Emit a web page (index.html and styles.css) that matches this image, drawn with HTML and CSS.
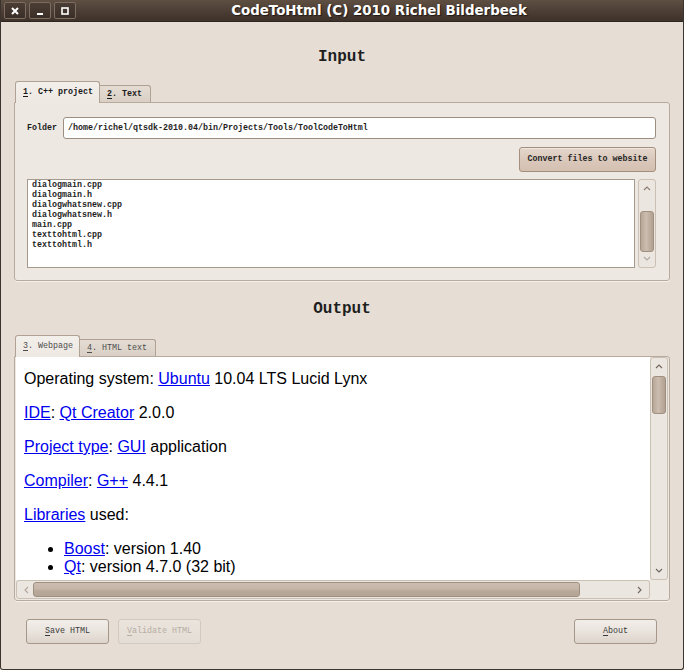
FILE: index.html
```html
<!DOCTYPE html>
<html>
<head>
<meta charset="utf-8">
<link rel="stylesheet" href="styles.css">
</head>
<body>
<div class="window">
  <div class="titlebar">
    <div class="wbtns">
      <div class="wbtn"><svg width="10" height="10" viewBox="0 0 10 10"><path d="M2 2 L8 8 M8 2 L2 8" stroke="#fff" stroke-width="2"/></svg></div>
      <div class="wbtn"><svg width="10" height="10" viewBox="0 0 10 10"><path d="M2 8 H8" stroke="#fff" stroke-width="2"/></svg></div>
      <div class="wbtn"><svg width="10" height="10" viewBox="0 0 10 10"><rect x="2" y="2" width="6" height="6" fill="none" stroke="#fff" stroke-width="1.6"/></svg></div>
    </div>
    <div class="title">CodeToHtml (C) 2010 Richel Bilderbeek</div>
  </div>
  <div class="content">
    <h2 class="heading first">Input</h2>
    <div class="tabbar">
      <div class="tab sel in t1"><u>1</u>. C++ project</div>
      <div class="tab in t2"><u>2</u>. Text</div>
    </div>
    <div class="panel inpanel">
      <div class="folderrow">
        <span class="lbl">Folder</span>
        <div class="field">/home/richel/qtsdk-2010.04/bin/Projects/Tools/ToolCodeToHtml</div>
      </div>
      <div class="btnrow">
        <div class="convert">Convert files to website</div>
      </div>
      <div class="listrow">
        <div class="list">
          <div>dialogmain.cpp</div>
          <div>dialogmain.h</div>
          <div>dialogwhatsnew.cpp</div>
          <div>dialogwhatsnew.h</div>
          <div>main.cpp</div>
          <div>texttohtml.cpp</div>
          <div>texttohtml.h</div>
        </div>
        <div class="vscroll small">
          <svg class="arr" width="8" height="5" viewBox="0 0 8 5"><polyline points="1,4 4,1 7,4" fill="none" stroke="#8a7e73" stroke-width="1.1"/></svg>
          <div class="vthumb t-list"></div>
          <svg class="arr down" width="8" height="5" viewBox="0 0 8 5"><polyline points="1,1 4,4 7,1" fill="none" stroke="#b3a89d" stroke-width="1.1"/></svg>
        </div>
      </div>
    </div>

    <h2 class="heading second">Output</h2>
    <div class="tabbar">
      <div class="tab sel out t3"><u>3</u>. Webpage</div>
      <div class="tab out t4"><u>4</u>. HTML text</div>
    </div>
    <div class="panel outpanel">
      <div class="webgrid">
        <div class="web">
          <p>Operating system: <a href="#">Ubuntu</a> 10.04 LTS Lucid Lynx</p>
          <p><a href="#">IDE</a>: <a href="#">Qt Creator</a> 2.0.0</p>
          <p><a href="#">Project type</a>: <a href="#">GUI</a> application</p>
          <p><a href="#">Compiler</a>: <a href="#">G++</a> 4.4.1</p>
          <p><a href="#">Libraries</a> used:</p>
          <ul>
            <li><a href="#">Boost</a>: version 1.40</li>
            <li><a href="#">Qt</a>: version 4.7.0 (32 bit)</li>
          </ul>
        </div>
        <div class="vscroll big">
          <svg class="arr" width="8" height="5" viewBox="0 0 8 5"><polyline points="1,4 4,1 7,4" fill="none" stroke="#6f655c" stroke-width="1.1"/></svg>
          <div class="vthumb t-web"></div>
          <svg class="arr down" width="8" height="5" viewBox="0 0 8 5"><polyline points="1,1 4,4 7,1" fill="none" stroke="#6f655c" stroke-width="1.1"/></svg>
        </div>
        <div class="hscroll">
          <svg class="harr" width="5" height="8" viewBox="0 0 5 8"><polyline points="4,1 1,4 4,7" fill="none" stroke="#b3a89d" stroke-width="1.1"/></svg>
          <div class="hthumb"></div>
          <svg class="harr right" width="5" height="8" viewBox="0 0 5 8"><polyline points="1,1 4,4 1,7" fill="none" stroke="#6f655c" stroke-width="1.1"/></svg>
        </div>
        <div class="corner"></div>
      </div>
    </div>

    <div class="bottom">
      <div class="btn"><u>S</u>ave HTML</div>
      <div class="btn disabled"><u>V</u>alidate HTML</div>
      <div class="spacer"></div>
      <div class="btn"><u>A</u>bout</div>
    </div>
  </div>
</div>
</body>
</html>
```

FILE: styles.css
```css
* { box-sizing: border-box; }
html, body { margin: 0; padding: 0; background: #e6ded5; }

.window {
  width: 684px;
  height: 670px;
  background: #e6ded5;
  border: 1px solid #3b342e;
  border-top: none;
  border-radius: 0 0 3px 3px;
  display: flex;
  flex-direction: column;
  overflow: hidden;
}

.titlebar {
  height: 22px;
  flex: none;
  margin: 0 -1px;
  background: linear-gradient(#5f4f43, #4a3c33 60%, #3e322a);
  border-bottom: 1px solid #2e2621;
  display: flex;
  align-items: center;
  padding-left: 4px;
}
.wbtns { display: flex; gap: 3px; }
.wbtn {
  width: 22px;
  height: 17px;
  border: 1px solid #7d6c60;
  border-radius: 2px;
  background: linear-gradient(#4b3d34, #3a2f28);
  display: flex;
  align-items: center;
  justify-content: center;
}
.title {
  flex: 1;
  text-align: center;
  color: #fff;
  font-family: "DejaVu Sans", sans-serif;
  font-weight: bold;
  font-size: 13.4px;
  text-shadow: 1px 1px 1px #1e1814;
  padding-right: 2px;
}

.content {
  flex: 1;
  display: flex;
  flex-direction: column;
  padding: 0 13px;
}

.heading {
  margin: 0;
  height: 20px;
  line-height: 20px;
  text-align: center;
  font-family: "Liberation Mono", monospace;
  font-weight: bold;
  font-size: 16px;
  color: #1e1e1e;
}
.heading.first { margin-top: 25px; margin-bottom: 14px; }
.heading.second { margin-top: 18px; margin-bottom: 16px; }

.tabbar {
  display: flex;
  align-items: flex-end;
  height: 22px;
  margin-bottom: -1px;
  padding-left: 1px;
  position: relative;
  z-index: 1;
}
.tab {
  font-family: "Liberation Mono", monospace;
  font-size: 8.33px;
  line-height: 10px;
  height: 18px;
  padding: 3px 7px 0 7px;
  border: 1px solid #b0a293;
  border-bottom-color: #b8ab9d;
  border-left: none;
  border-radius: 0 3px 0 0;
  background: linear-gradient(#e4dcd3, #d9cfc5);
  white-space: nowrap;
}
.tab.sel {
  height: 22px;
  padding-top: 5px;
  border-left: 1px solid #b0a293;
  border-bottom: none;
  border-radius: 3px 3px 0 0;
  background: linear-gradient(#f3efea, #ede8e2);
}
.tab.in { font-weight: bold; color: #1a1a1a; }
.tab.out { color: #4d4d4d; }
.tab u { text-decoration-thickness: 1px; text-underline-offset: 2px; }
.t1 { width: 85px; }
.t2 { width: 51px; }
.t3 { width: 65px; }
.t4 { width: 76px; }

.panel {
  border: 1px solid #b8ab9d;
  border-radius: 0 3px 3px 3px;
  background: #ede8e2;
  box-shadow: 0 1px 0 #f4f0ec;
}
.inpanel {
  height: 179px;
  padding: 14px 13px 12px 12px;
  display: flex;
  flex-direction: column;
}
.folderrow {
  display: flex;
  align-items: center;
  gap: 6px;
  height: 22px;
}
.lbl {
  font-family: "Liberation Mono", monospace;
  font-size: 8.33px;
  font-weight: bold;
  color: #1e1e1e;
}
.field {
  flex: 1;
  height: 22px;
  border: 1px solid #9c8f81;
  border-radius: 3px;
  background: #fff;
  font-family: "Liberation Mono", monospace;
  font-size: 8.33px;
  font-weight: bold;
  color: #1e1e1e;
  line-height: 20px;
  padding-left: 4px;
}
.btnrow {
  display: flex;
  justify-content: flex-end;
  margin-top: 8px;
  height: 25px;
}
.convert {
  width: 137px;
  height: 25px;
  border: 1px solid #a48f7e;
  border-radius: 3px;
  background: linear-gradient(#e5d7cc, #dac8bb 50%, #d4c0b1);
  box-shadow: inset 0 1px 0 #efe5dd;
  font-family: "Liberation Mono", monospace;
  font-size: 8.33px;
  font-weight: bold;
  color: #262626;
  line-height: 23px;
  text-align: center;
}
.listrow {
  display: flex;
  gap: 3px;
  margin-top: 7px;
  height: 89px;
}
.list {
  flex: 1;
  border: 1px solid #a69a8c;
  background: #fff;
  padding: 0 4px;
  font-family: "Liberation Mono", monospace;
  font-size: 8.33px;
  font-weight: bold;
  line-height: 10px;
  color: #1e1e1e;
}

.vscroll {
  width: 18px;
  border: 1px solid #cbc0b4;
  border-radius: 3px;
  background: #ebe6e0;
  display: flex;
  flex-direction: column;
  align-items: center;
}
.vscroll .arr { margin-top: 6px; flex: none; }
.vscroll .down { margin-top: auto; margin-bottom: 6px; }
.vthumb {
  width: 14px;
  flex: none;
  border: 1px solid #a09080;
  border-radius: 3px;
  background: linear-gradient(90deg, #b7a798, #cbbdb0 45%, #c3b4a6 60%, #b2a192);
}
.t-list { height: 41px; margin-top: 20px; }
.t-web { height: 38px; margin-top: 7px; }

.outpanel {
  height: 245px;
  padding: 0 1px 1px 1px;
}
.webgrid {
  height: 100%;
  display: grid;
  grid-template-columns: 1fr 18px;
  grid-template-rows: 1fr 19px;
}
.web {
  background: #fff;
  overflow: hidden;
  padding: 13px 0 0 8px;
  font-family: "Liberation Sans", Arial, sans-serif;
  font-size: 16px;
  line-height: 18px;
  color: #000;
}
.web p { margin: 0 0 16px 0; }
.web ul { margin: 0; padding-left: 40px; }
.web a { color: #0000ee; text-decoration: underline; }
.hscroll {
  border: 1px solid #cbc0b4;
  border-radius: 3px;
  background: #ebe6e0;
  display: flex;
  align-items: center;
  padding: 0 1px;
}
.harr { flex: none; margin-left: 6px; }
.harr.right { margin-left: auto; margin-right: 6px; }
.hthumb {
  width: 547px;
  height: 15px;
  margin-left: 4px;
  border: 1px solid #a09080;
  border-radius: 3px;
  background: linear-gradient(#cbbdb0, #c5b6a9 45%, #b9a99a 60%, #b4a495);
}
.corner { background: #ede8e2; }

.bottom {
  display: flex;
  margin-top: 18px;
  padding: 0 13px 0 12px;
  gap: 9px;
}
.spacer { flex: 1; }
.btn {
  width: 83px;
  height: 25px;
  border: 1px solid #a69888;
  border-radius: 3px;
  background: linear-gradient(#f1ede9, #ebe5df 45%, #ddd4cb);
  font-family: "Liberation Mono", monospace;
  font-size: 8.33px;
  color: #3a3a3a;
  line-height: 23px;
  text-align: center;
}
.btn u { text-underline-offset: 2px; }
.btn.disabled {
  border-color: #d3cabf;
  background: linear-gradient(#eae4dd, #e4ddd5);
  color: #b7ada3;
}
```
